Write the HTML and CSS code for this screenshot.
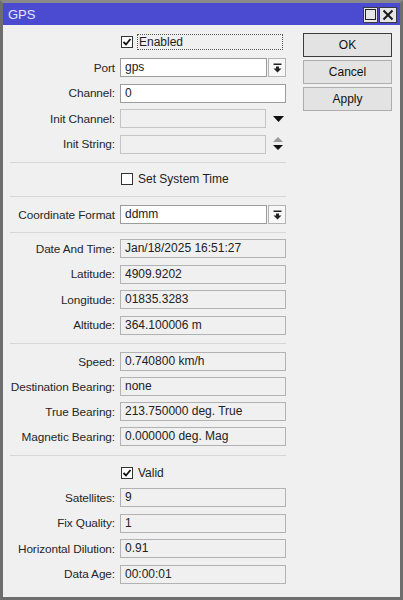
FILE: index.html
```html
<!DOCTYPE html>
<html>
<head>
<meta charset="utf-8">
<link rel="stylesheet" href="styles.css">
</head>
<body>
<div class="window">
  <div class="titlebar">
    <span class="title">GPS</span>
    <div class="tbtns">
      <span class="tbtn max"><span class="maxicon"></span></span>
      <span class="tbtn close"><svg width="12" height="12" viewBox="0 0 12 12"><path d="M1.5 1.5L10.5 10.5M10.5 1.5L1.5 10.5" stroke="#1a1a1a" stroke-width="2"/></svg></span>
    </div>
  </div>
  <div class="content">
    <div class="form">
      <div class="group g1">
        <div class="row">
          <span></span>
          <label class="check"><span class="box"><svg width="10" height="10" viewBox="0 0 10 10"><path d="M1.5 5L4 7.5L8.5 2" fill="none" stroke="#111" stroke-width="1.8"/></svg></span><span class="ctext focus">Enabled</span></label>
        </div>
        <div class="row">
          <span class="lbl">Port</span>
          <div class="combo"><div class="inp edit">gps</div><div class="ddbtn"><svg width="9" height="10" viewBox="0 0 9 10"><rect x="0.5" y="0.5" width="8" height="1.5" fill="#222"/><path d="M3 3.5h3v2h2.5L4.5 9.5 0.5 5.5H3z" fill="#222"/></svg></div></div>
        </div>
        <div class="row">
          <span class="lbl">Channel:</span>
          <div class="inp edit">0</div>
        </div>
        <div class="row">
          <span class="lbl">Init Channel:</span>
          <div class="combo"><div class="inp dis wide"></div><div class="arrowbox"><svg width="11" height="6" viewBox="0 0 11 6"><path d="M0 0H11L5.5 6z" fill="#111"/></svg></div></div>
        </div>
        <div class="row">
          <span class="lbl">Init String:</span>
          <div class="combo"><div class="inp dis wide"></div><div class="arrowbox"><svg width="10" height="14" viewBox="0 0 10 14"><path d="M5 0L10 5H0z" fill="#9a9a9a"/><path d="M0 8H10L5 13z" fill="#111"/></svg></div></div>
        </div>
      </div>
      <div class="group g2">
        <div class="row">
          <span></span>
          <label class="check"><span class="box"></span><span class="ctext">Set System Time</span></label>
        </div>
      </div>
      <div class="group g3">
        <div class="row">
          <span class="lbl">Coordinate Format</span>
          <div class="combo"><div class="inp edit">ddmm</div><div class="ddbtn"><svg width="9" height="10" viewBox="0 0 9 10"><rect x="0.5" y="0.5" width="8" height="1.5" fill="#222"/><path d="M3 3.5h3v2h2.5L4.5 9.5 0.5 5.5H3z" fill="#222"/></svg></div></div>
        </div>
      </div>
      <div class="group g4">
        <div class="row"><span class="lbl">Date And Time:</span><div class="inp ro">Jan/18/2025 16:51:27</div></div>
        <div class="row"><span class="lbl">Latitude:</span><div class="inp ro">4909.9202</div></div>
        <div class="row"><span class="lbl">Longitude:</span><div class="inp ro">01835.3283</div></div>
        <div class="row"><span class="lbl">Altitude:</span><div class="inp ro">364.100006 m</div></div>
      </div>
      <div class="group g5">
        <div class="row"><span class="lbl">Speed:</span><div class="inp ro">0.740800 km/h</div></div>
        <div class="row"><span class="lbl">Destination Bearing:</span><div class="inp ro">none</div></div>
        <div class="row"><span class="lbl">True Bearing:</span><div class="inp ro">213.750000 deg. True</div></div>
        <div class="row"><span class="lbl">Magnetic Bearing:</span><div class="inp ro">0.000000 deg. Mag</div></div>
      </div>
      <div class="group g6">
        <div class="row valid">
          <span></span>
          <label class="check"><span class="box"><svg width="10" height="10" viewBox="0 0 10 10"><path d="M1.5 5L4 7.5L8.5 2" fill="none" stroke="#111" stroke-width="1.8"/></svg></span><span class="ctext">Valid</span></label>
        </div>
        <div class="row"><span class="lbl">Satellites:</span><div class="inp ro">9</div></div>
        <div class="row"><span class="lbl">Fix Quality:</span><div class="inp ro">1</div></div>
        <div class="row"><span class="lbl">Horizontal Dilution:</span><div class="inp ro">0.91</div></div>
        <div class="row"><span class="lbl">Data Age:</span><div class="inp ro">00:00:01</div></div>
      </div>
    </div>
    <div class="btns">
      <div class="btn default">OK</div>
      <div class="btn">Cancel</div>
      <div class="btn">Apply</div>
    </div>
  </div>
</div>
</body>
</html>
```

FILE: styles.css
```css
html, body {
  margin: 0;
  padding: 0;
}
body {
  font-family: "Liberation Sans", Arial, sans-serif;
  font-size: 12px;
  color: #222;
}
.window {
  box-sizing: border-box;
  width: 403px;
  height: 600px;
  border: 3px solid #6e6e6e;
  border-top-color: #8a8a8a;
  background: #f0f0f0;
  display: flex;
  flex-direction: column;
}
.titlebar {
  height: 22px;
  flex: none;
  background: #4b4bd2;
  display: flex;
  align-items: center;
  padding-left: 5px;
  color: #e4e4fb;
  font-size: 13px;
}
.title {
  flex: 1;
}
.tbtns {
  display: flex;
  gap: 1px;
  margin-right: 3px;
  margin-top: 1px;
}
.tbtn {
  box-sizing: border-box;
  height: 16px;
  background: #e6e6e6;
  border: 1px solid #3a3a3a;
  display: flex;
  align-items: center;
  justify-content: center;
}
.tbtn.max {
  width: 15px;
}
.tbtn.close {
  width: 18px;
}
.maxicon {
  box-sizing: border-box;
  width: 11px;
  height: 11px;
  border: 1px solid #222;
}
.content {
  display: flex;
  padding: 7.5px 0 0 7px;
}
.form {
  width: 276px;
  display: flex;
  flex-direction: column;
}
.group {
  display: flex;
  flex-direction: column;
  gap: 6.5px;
  border-top: 1px solid #d7d7d7;
}
.g1 { border-top: none; padding-bottom: 8.5px; }
.g2 { padding: 6.5px 0 7.5px; }
.g3 { padding: 8px 0 8px; }
.g4 { padding: 6px 0 8.5px; }
.g5 { padding: 8px 0 9px; gap: 6px; }
.g6 { padding: 7.5px 0 0; }
.row.valid { margin-bottom: -1px; }
.row {
  display: grid;
  grid-template-columns: 106px 166px;
  column-gap: 4px;
  height: 19px;
  align-items: center;
}
.lbl {
  text-align: right;
  white-space: nowrap;
  color: #262626;
  font-size: 11.8px;
  letter-spacing: -0.1px;
  padding-right: 1px;
}
.inp {
  box-sizing: border-box;
  height: 19px;
  border: 1px solid #a8a8a8;
  padding-left: 4px;
  line-height: 17px;
  white-space: nowrap;
  overflow: hidden;
}
.edit {
  background: #fff;
  border-color: #9c9c9c;
}
.ro {
  background: #f0f0f0;
  border-color: #b2b2b2;
}
.dis {
  background: #f0f0f0;
  border-color: #c4c4c4;
}
.combo {
  display: flex;
  height: 19px;
  align-items: center;
}
.combo .edit {
  width: 147px;
}
.combo .wide {
  width: 146px;
}
.ddbtn {
  box-sizing: border-box;
  width: 18px;
  height: 19px;
  margin-left: 1px;
  border: 1px solid #b4b4b4;
  background: #f7f7f7;
  display: flex;
  align-items: center;
  justify-content: center;
}
.arrowbox {
  flex: 1;
  display: flex;
  align-items: center;
  justify-content: center;
  padding-left: 4px;
}
.check {
  display: flex;
  align-items: center;
  height: 19px;
}
.box {
  box-sizing: border-box;
  width: 12px;
  height: 12px;
  margin-left: 1px;
  border: 1px solid #333;
  background: #fff;
  display: flex;
  align-items: center;
  justify-content: center;
}
.ctext {
  margin-left: 5px;
  font-size: 12px;
  color: #1e1e1e;
}
.focus {
  flex: 1;
  margin-left: 4px;
  margin-right: 3px;
  padding-left: 1px;
  height: 14px;
  line-height: 14px;
  border: 1px dotted #555;
}
.btns {
  margin-left: 17px;
  width: 89px;
  display: flex;
  flex-direction: column;
  gap: 3px;
}
.btn {
  box-sizing: border-box;
  height: 24px;
  border: 1px solid #adadad;
  background: #e3e3e3;
  display: flex;
  align-items: center;
  justify-content: center;
  color: #111;
  font-size: 12px;
}
.btn.default {
  border-color: #3c3c3c;
}
```
